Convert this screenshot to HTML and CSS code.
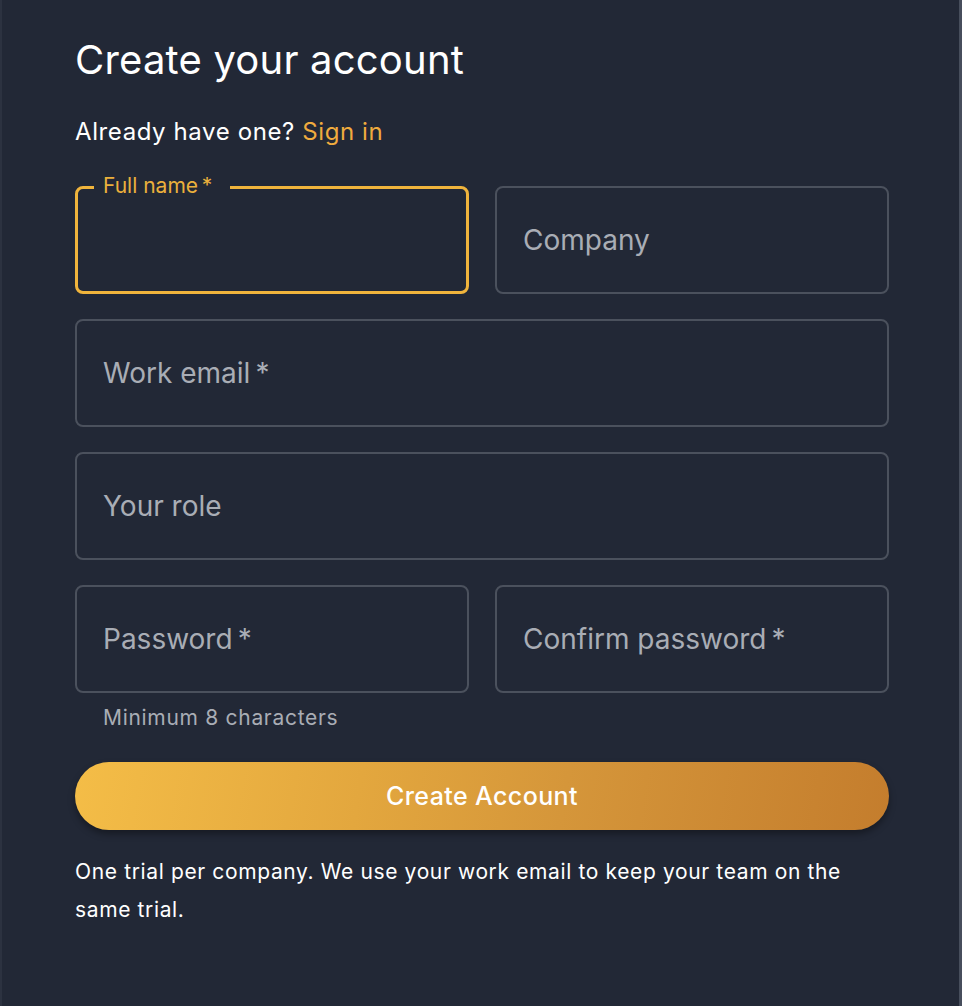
FILE: index.html
```html
<!DOCTYPE html>
<html lang="en">
<head>
<meta charset="utf-8">
<title>Create your account</title>
<link rel="stylesheet" href="styles.css">
</head>
<body>
<div class="page">
  <h1 class="title">Create your account</h1>
  <p class="signin">Already have one? <a class="signin-link" href="#">Sign in</a></p>
  <form class="fields">
    <div class="field field-focused">
      <span class="field-label">Full name&thinsp;*</span>
    </div>
    <div class="field"><span class="placeholder">Company</span></div>
    <div class="field field-wide"><span class="placeholder">Work email&thinsp;*</span></div>
    <div class="field field-wide"><span class="placeholder">Your role</span></div>
    <div class="field-group">
      <div class="field"><span class="placeholder">Password&thinsp;*</span></div>
      <p class="helper">Minimum 8 characters</p>
    </div>
    <div class="field-group">
      <div class="field"><span class="placeholder">Confirm password&thinsp;*</span></div>
    </div>
  </form>
  <button class="submit" type="button">Create Account</button>
  <p class="note">One trial per company. We use your work email to keep your team on the same trial.</p>
</div>
</body>
</html>
```

FILE: styles.css
```css
html, body {
  margin: 0;
  padding: 0;
  background: #222836;
}

.page {
  box-sizing: border-box;
  min-height: 1006px;
  padding: 36px 70px 0 73px;
  border-left: 2px solid #2c3240;
  border-right: 3px solid #474e5c;
  font-family: Inter, "Noto Sans", sans-serif;
  color: #ffffff;
}

.title {
  margin: 0;
  font-size: 40px;
  line-height: 48px;
  font-weight: 400;
  letter-spacing: 0.2px;
}

.signin {
  margin: 32px 0 0;
  font-size: 24px;
  line-height: 32px;
  letter-spacing: 0.6px;
}

.signin-link {
  color: #f0ab3e;
  text-decoration: none;
}

.fields {
  margin-top: 38px;
  display: grid;
  grid-template-columns: 1fr 1fr;
  column-gap: 26px;
  row-gap: 25px;
}

.field {
  position: relative;
  box-sizing: border-box;
  height: 108px;
  border: 2px solid #4b515d;
  border-radius: 8px;
  display: flex;
  align-items: center;
  padding-left: 26px;
}

.field-wide {
  grid-column: 1 / span 2;
}

.field-focused {
  border: 3px solid #f0b43c;
  padding-left: 25px;
}

.field-label {
  position: absolute;
  top: -17px;
  left: 16px;
  padding: 0 18px 0 9px;
  background: #222836;
  color: #ebb03c;
  font-size: 21px;
  line-height: 28px;
}

.placeholder {
  color: #a9adb5;
  font-size: 28px;
  line-height: 36px;
}

.helper {
  margin: 11px 0 0 28px;
  color: #a9adb5;
  font-size: 21px;
  line-height: 28px;
  letter-spacing: 0.7px;
}

.submit {
  display: block;
  width: 100%;
  height: 68px;
  margin-top: 30px;
  border: 0;
  border-radius: 34px;
  background: linear-gradient(100deg, #f4bd47 0%, #e3a73e 35%, #d5963a 60%, #c47d2d 100%);
  box-shadow: 0 4px 7px rgba(0, 0, 0, 0.35);
  color: #ffffff;
  font-family: Inter, "Noto Sans", sans-serif;
  font-size: 25px;
  font-weight: 500;
  letter-spacing: 0.4px;
  cursor: pointer;
}

.note {
  margin: 23px 0 0;
  font-size: 21px;
  line-height: 38px;
  letter-spacing: 0.63px;
  max-width: 800px;
}
```
